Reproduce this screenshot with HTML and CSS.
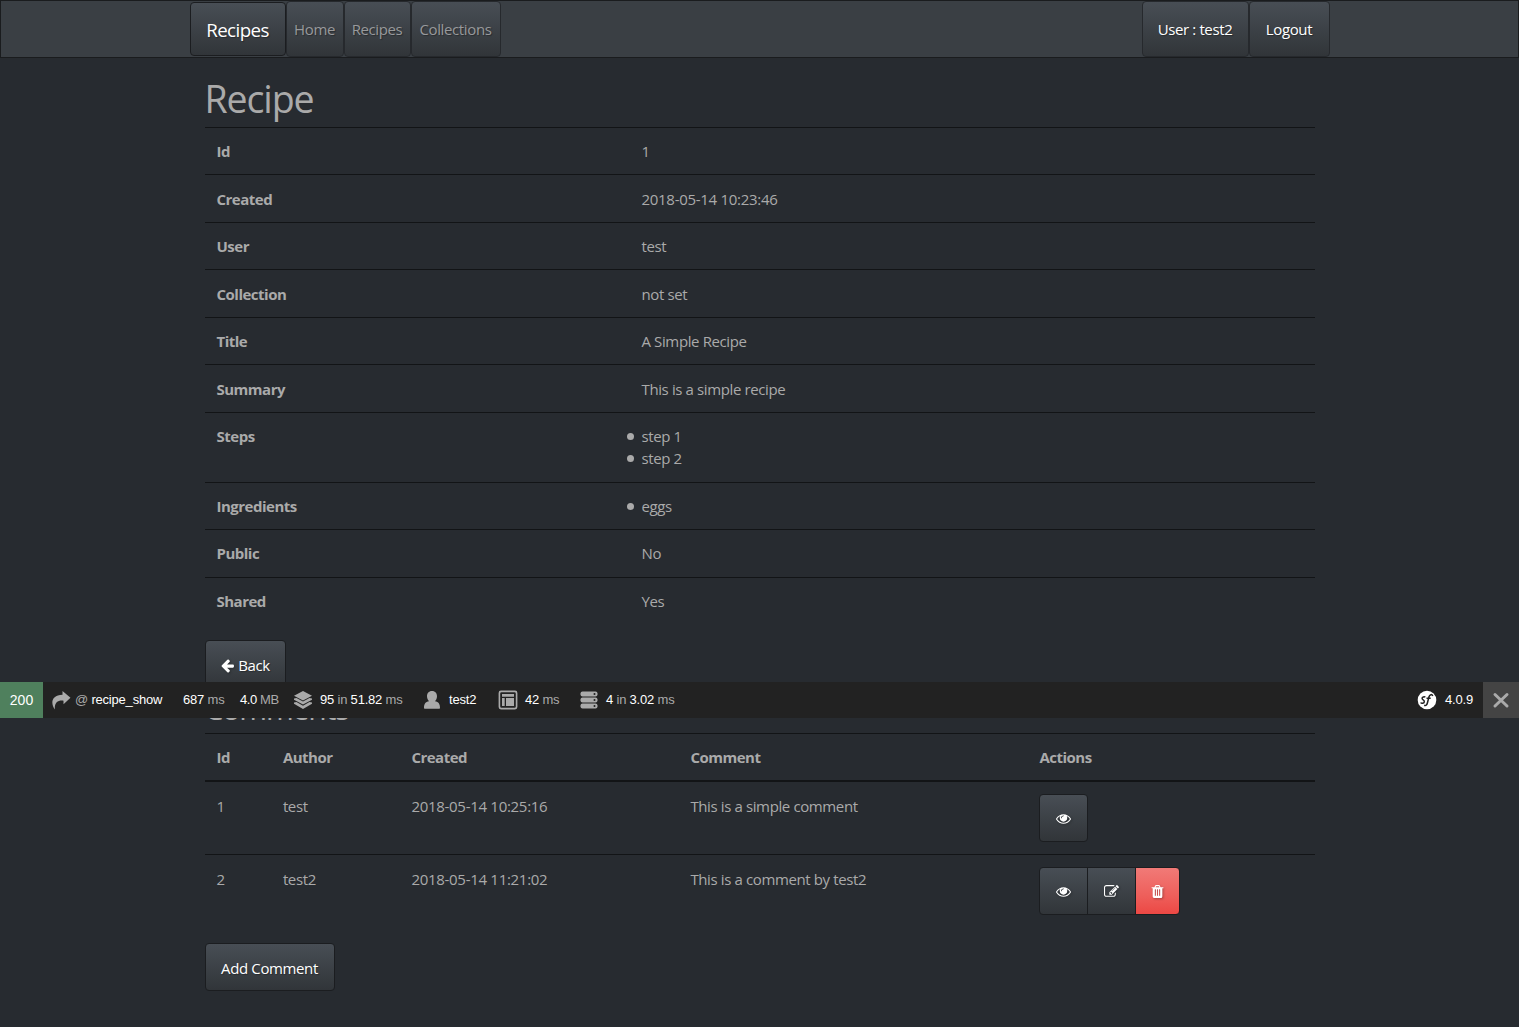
FILE: index.html
```html
<!DOCTYPE html>
<html lang="en">
<head>
<meta charset="utf-8">
<title>Recipe</title>
<link rel="stylesheet" href="styles.css">
</head>
<body>
<svg class="defs" width="0" height="0">
  <symbol id="eye" viewBox="0 0 1792 1792"><path d="M1664 960q-152-236-381-353 61 104 61 225 0 185-131.5 316.5t-316.5 131.5-316.5-131.5-131.5-316.5q0-121 61-225-229 117-381 353 133 205 333.5 326.5t434.5 121.5 434.5-121.5 333.5-326.5zm-720-384q0-20-14-34t-34-14q-125 0-214.5 89.5t-89.5 214.5q0 20 14 34t34 14 34-14 14-34q0-86 61-147t147-61q20 0 34-14t14-34zm848 384q0 34-20 69-140 230-376.5 368.5t-499.5 138.5-499.5-139-376.5-368q-20-35-20-69t20-69q140-229 376.5-368t499.5-139 499.5 139 376.5 368q20 35 20 69z"/></symbol>
</svg>
<nav class="navbar">
  <div class="nav-inner">
    <a class="brand"><span>Recipes</span></a>
    <a class="nav-link home"><span>Home</span></a>
    <a class="nav-link recipes"><span>Recipes</span></a>
    <a class="nav-link collections"><span>Collections</span></a>
    <a class="nav-link user"><span>User : test2</span></a>
    <a class="nav-link logout"><span>Logout</span></a>
  </div>
</nav>
<main class="container">
  <h1>Recipe</h1>
  <div class="details">
    <div class="row"><b>Id</b><span>1</span></div>
    <div class="row"><b>Created</b><span class="date">2018-05-14 10:23:46</span></div>
    <div class="row"><b>User</b><span>test</span></div>
    <div class="row"><b>Collection</b><span>not set</span></div>
    <div class="row"><b>Title</b><span>A Simple Recipe</span></div>
    <div class="row"><b>Summary</b><span>This is a simple recipe</span></div>
    <div class="row"><b>Steps</b><ul><li>step 1</li><li>step 2</li></ul></div>
    <div class="row"><b>Ingredients</b><ul><li>eggs</li></ul></div>
    <div class="row"><b>Public</b><span>No</span></div>
    <div class="row"><b>Shared</b><span>Yes</span></div>
  </div>
  <a class="btn back"><svg viewBox="0 0 1792 1792"><path d="M1664 896v128q0 53-32.5 90.5t-84.5 37.5h-704l293 294q38 36 38 90t-38 90l-75 76q-37 37-90 37-52 0-91-37l-651-652q-37-37-37-90 0-52 37-91l651-650q38-38 91-38 52 0 90 38l75 74q38 38 38 91t-38 91l-293 293h704q52 0 84.5 37.5t32.5 90.5z"/></svg><span>Back</span></a>
  <h2>Comments</h2>
  <div class="comments">
    <div class="crow head"><b>Id</b><b>Author</b><b>Created</b><b>Comment</b><b>Actions</b></div>
    <div class="crow">
      <span>1</span><span>test</span><span class="date">2018-05-14 10:25:16</span><span>This is a simple comment</span>
      <div class="group"><a class="btn icon"><svg><use href="#eye"/></svg></a></div>
    </div>
    <div class="crow">
      <span>2</span><span>test2</span><span class="date">2018-05-14 11:21:02</span><span>This is a comment by test2</span>
      <div class="group">
        <a class="btn icon"><svg><use href="#eye"/></svg></a>
        <a class="btn icon"><svg viewBox="0 0 1792 1792"><path d="M888 1184l116-116-152-152-116 116v56h96v96h56zm440-720q-16-16-33 1l-350 350q-17 17-1 33t33-1l350-350q17-17 1-33zm80 594v190q0 119-84.5 203.5t-203.5 84.5h-832q-119 0-203.5-84.5t-84.5-203.5v-832q0-119 84.5-203.5t203.5-84.5h832q63 0 117 25 15 7 18 23 3 17-9 29l-49 49q-14 14-32 8-23-6-45-6h-832q-66 0-113 47t-47 113v832q0 66 47 113t113 47h832q66 0 113-47t47-113v-126q0-13 9-22l64-64q15-15 35-7t20 29zm-96-738l288 288-672 672h-288v-288zm444 132l-92 92-288-288 92-92q28-28 68-28t68 28l152 152q28 28 28 68t-28 68z"/></svg></a>
        <a class="btn icon danger"><svg viewBox="0 0 1792 1792"><path d="M704 1376v-704q0-14-9-23t-23-9h-64q-14 0-23 9t-9 23v704q0 14 9 23t23 9h64q14 0 23-9t9-23zm256 0v-704q0-14-9-23t-23-9h-64q-14 0-23 9t-9 23v704q0 14 9 23t23 9h64q14 0 23-9t9-23zm256 0v-704q0-14-9-23t-23-9h-64q-14 0-23 9t-9 23v704q0 14 9 23t23 9h64q14 0 23-9t9-23zm-544-992h448l-48-117q-7-9-17-11h-317q-10 2-17 11zm928 32v64q0 14-9 23t-23 9h-96v948q0 83-47 143.5t-113 60.5h-832q-66 0-113-58.5t-47-141.5v-952h-96q-14 0-23-9t-9-23v-64q0-14 9-23t23-9h309l70-167q15-37 54-63t79-26h320q40 0 79 26t54 63l70 167h309q14 0 23 9t9 23z"/></svg></a>
      </div>
    </div>
  </div>
  <a class="btn add"><span>Add Comment</span></a>
</main>
<div class="toolbar">
  <div class="block status">200</div>
  <div class="block route"><svg width="20" height="20" viewBox="0 0 20 20"><path d="M11.5 1 19.5 7.800 12.500 14.300V10.700C7 10.200 3.600 12 3.800 19.500 -.7 13 .5 5.300 11.500 4.800Z"/></svg><span><i>@</i> recipe_show</span></div>
  <div class="block time"><span>687 <i>ms</i></span></div>
  <div class="block memory"><span>4.0 <i>MB</i></span></div>
  <div class="block cache"><svg width="20" height="20" viewBox="0 0 20 20"><path d="M10 1 19 5.700 10 10.500 1 5.700ZM1 8.500 3.500 7.900 10 11.500 16.500 7.900 19 8.500V9.700L10 14.600 1 9.700ZM1 12.600 3.500 12 10 15.700 16.500 12 19 12.600V13.800L10 18.900 1 13.800Z"/></svg><span>95 <i>in</i> 51.82 <i>ms</i></span></div>
  <div class="block person"><svg width="18" height="20" viewBox="0 0 18 20"><path d="M9 1C12.300 1 14 3.300 14 6.200 14 8.300 13 10.200 12 11.200 15.500 12 17 13.500 17 18Q17 18.700 16.300 18.700H1.700Q1 18.700 1 18C1 13.500 2.500 12 6 11.200 5 10.200 4 8.300 4 6.200 4 3.300 5.700 1 9 1Z"/></svg><span>test2</span></div>
  <div class="block twig"><svg width="20" height="20" viewBox="0 0 20 20"><path fill-rule="evenodd" d="M3 .6H17Q19.400 .6 19.400 3V17Q19.400 19.400 17 19.400H3Q.6 19.400 .6 17V3Q.6 .6 3 .6ZM3.500 2.200Q2.200 2.200 2.200 3.500V16.500Q2.200 17.800 3.500 17.800H16.500Q17.800 17.800 17.800 16.500V3.500Q17.800 2.200 16.500 2.200ZM4 4H16V6.700H4ZM4 8H6.700V16H4ZM8 8H16V16H8Z"/></svg><span>42 <i>ms</i></span></div>
  <div class="block db"><svg width="20" height="20" viewBox="0 0 20 20"><rect x="1.500" y="1.500" width="17" height="5" rx="2"/><rect x="1.500" y="7.500" width="17" height="5" rx="2"/><rect x="1.500" y="13.500" width="17" height="5" rx="2"/><g fill="#222"><circle cx="15.500" cy="4" r="1"/><circle cx="15.500" cy="10" r="1"/><circle cx="15.500" cy="16" r="1"/></g></svg><span>4 <i>in</i> 3.02 <i>ms</i></span></div>
  <div class="block version"><svg width="20" height="20" viewBox="0 0 20 20"><circle cx="10" cy="10" r="9.300" fill="#fff"/><path class="stroke" d="M8.300 7.300C7.500 6.500 5 6.900 5.100 8.500 5.200 10 7.600 10 7.300 11.800 7 13.500 4.400 13.800 3.700 12.500M15.700 6C15.300 3.800 12.600 4.300 11.900 7L10.600 12.200C10 14.800 9 16 7.200 15.300M9.500 8.300H13.700"/></svg><span>4.0.9</span></div>
  <div class="close"><svg width="20" height="20" viewBox="0 0 20 20"><path d="M4 4.500 16 16M16 4.500 4 16" fill="none" stroke="#aaa" stroke-width="3" stroke-linecap="round"/></svg></div>
</div>
</body>
</html>
```
FILE: styles.css
```css
* { box-sizing: border-box; }
body {
  margin: 0;
  height: 1027px;
  overflow: hidden;
  background: #272b30;
  color: #aaa;
  font: 15px/22.5px "Open Sans", "Noto Sans", sans-serif;
  letter-spacing: -0.38px;
}
.defs { display: block; height: 0; }
.navbar {
  height: 58px;
  border: 1px solid #1a1c1e;
  background: #3a3f44;
}
.nav-inner {
  display: flex;
  width: 1140px;
  margin: 0 auto;
}
.brand, .nav-link, .btn {
  display: flex;
  align-items: center;
  justify-content: center;
  border: 1px solid #1b1d20;
  border-radius: 4px;
  background: linear-gradient(#484e55, #3a3f44 60%, #313539);
  text-shadow: 1px 1px 1px rgba(0, 0, 0, .3);
  white-space: nowrap;
}
.brand { width: 96px; height: 54px; margin-top: 1px; padding-top: 2px; color: #fff; font-size: 18.75px; letter-spacing: -.6px; }
.nav-link { height: 56px; border-color: #26292d; color: #98999b; }
.home { width: 58px; }
.recipes { width: 67px; }
.collections { width: 90px; }
.user { width: 107px; margin-left: auto; color: #fff; }
.logout { width: 81px; color: #fff; }
.container { width: 1110px; margin: 0 auto; }
h1, h2 { margin: 0; font-weight: 400; }
h1 { height: 68.9px; padding-top: 19px; font-size: 37.5px; line-height: 44px; letter-spacing: -1.1px; }
h2 { height: 44.6px; padding-top: 2.5px; font-size: 30px; line-height: 36px; letter-spacing: -1.1px; }
b { font-weight: 700; letter-spacing: -.5px; }
.date { letter-spacing: -.29px; }
.row {
  display: flex;
  padding: 12.2px 12px 11.8px;
  border-top: 1px solid #121416;
}
.row b { width: 425px; }
ul { margin: 0; padding: 0; list-style: none; }
li { display: flex; align-items: center; margin-left: -15px; }
li::before { content: ""; width: 7px; height: 7px; margin-right: 8px; border-radius: 50%; background: #aaa; }
.btn { height: 48px; padding-top: 2px; color: #fff; }
.btn svg { width: 15px; height: 15px; fill: #fff; filter: drop-shadow(1px 1px 1px rgba(0, 0, 0, .3)); }
.back { width: 81px; margin-top: 16px; gap: 3px; }
.crow {
  display: grid;
  grid-template-columns: 66.400px 128.500px 279px 349px 1fr;
  padding: 12px 0 12px 12px;
  border-top: 1px solid #121416;
}
.crow > span { padding-top: 1px; }
.head { height: 47px; }
.head + .crow { border-top-width: 2px; }
.group { display: flex; }
.group .btn { width: 49px; }
.group .btn + .btn { margin-left: -1px; }
.group .btn:not(:last-child) { border-top-right-radius: 0; border-bottom-right-radius: 0; }
.group .btn + .btn { border-top-left-radius: 0; border-bottom-left-radius: 0; }
.group .danger { width: 45px; background: linear-gradient(#f17a77, #ee5f5b 60%, #ec4844); }
.add { width: 130px; margin-top: 16px; padding-top: 3px; }
.toolbar {
  position: absolute;
  top: 682px;
  left: 0;
  display: flex;
  width: 100%;
  height: 36px;
  background: #222;
  color: #fff;
  font: 13px/36px "Liberation Sans", Arial, sans-serif;
  letter-spacing: -.2px;
  white-space: nowrap;
}
.toolbar i { color: #aaa; font-style: normal; }
.block { display: flex; align-items: center; }
.block svg { flex: none; fill: #aaa; }
.status { justify-content: center; width: 43px; background: #4f805d; font-size: 14px; letter-spacing: 0; }
.route { width: 140px; padding-left: 8px; gap: 4px; }
.time { width: 57px; }
.memory { width: 53px; letter-spacing: -.4px; }
.cache { width: 130px; gap: 7px; }
.person { width: 75px; gap: 8px; }
.twig { width: 81px; gap: 7px; }
.db { gap: 7px; }
.version { width: 66px; margin-left: auto; gap: 8px; }
.version .stroke { fill: none; stroke: #222; stroke-width: 1.500; }
.close { display: flex; align-items: center; justify-content: center; width: 36px; background: #444; }
```
